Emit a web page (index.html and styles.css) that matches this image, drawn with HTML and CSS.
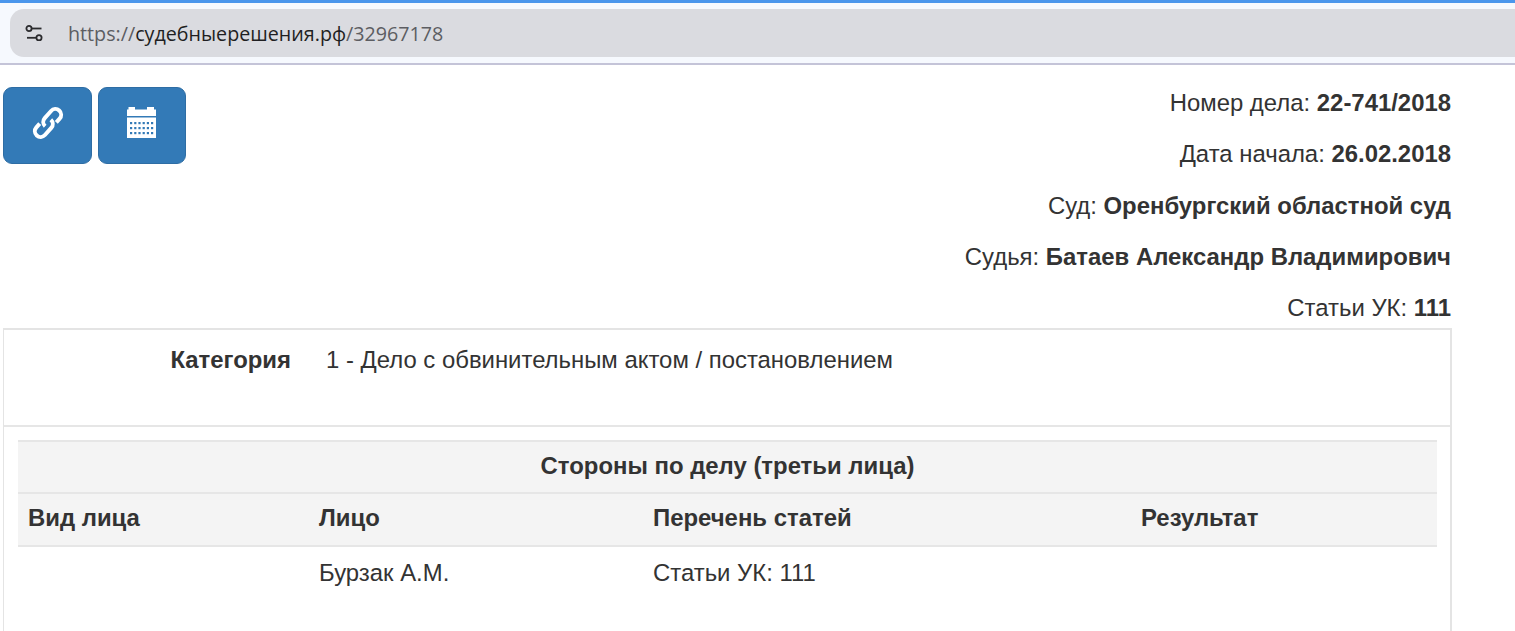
FILE: index.html
```html
<!DOCTYPE html>
<html lang="ru">
<head>
<meta charset="utf-8">
<title>Дело 22-741/2018</title>
<link rel="stylesheet" href="styles.css">
</head>
<body>
<div class="chrome">
  <div class="address">
    <svg class="tune" viewBox="0 0 20 16" width="20" height="16" aria-hidden="true">
      <circle cx="5" cy="3.500" r="2.600"/><path d="M7.600 3.500H17.500"/>
      <circle cx="15" cy="12.800" r="2.600"/><path d="M3 12.800H12.400"/>
    </svg>
    <span class="url"><span class="dim">https://</span>судебныерешения.рф<span class="dim">/32967178</span></span>
  </div>
</div>
<main class="page">
  <header class="top">
    <div class="actions">
      <a class="btn first" href="#"><svg viewBox="-3 -3 38 38" width="38" height="38" aria-hidden="true">
        <g class="link" transform="rotate(-48 16 16)">
          <path d="M10 10.250H5A5.750 5.750 0 0 0 5 21.750H14.500A5.750 5.750 0 0 0 20.250 16"/>
          <path d="M22 21.750H27A5.750 5.750 0 0 0 27 10.250H17.500A5.750 5.750 0 0 0 11.750 16"/>
        </g></svg></a>
      <a class="btn" href="#"><svg viewBox="0 0 32 32" width="32" height="32" aria-hidden="true">
        <path class="cal" d="M1 2.500H2.500V0H9V2.500H21V0H28V2.500H30V9H1ZM1 10.500H30V31H1Z"/>
        <g class="dots">
          <rect x="4" y="15" width="2.200" height="2.200"/><rect x="8.200" y="15" width="2.200" height="2.200"/><rect x="12.400" y="15" width="2.200" height="2.200"/><rect x="16.600" y="15" width="2.200" height="2.200"/><rect x="20.800" y="15" width="2.200" height="2.200"/><rect x="25" y="15" width="2.200" height="2.200"/>
          <rect x="4" y="20" width="2.200" height="2.200"/><rect x="8.200" y="20" width="2.200" height="2.200"/><rect x="12.400" y="20" width="2.200" height="2.200"/><rect x="16.600" y="20" width="2.200" height="2.200"/><rect x="20.800" y="20" width="2.200" height="2.200"/><rect x="25" y="20" width="2.200" height="2.200"/>
          <rect x="4" y="25" width="2.200" height="2.200"/><rect x="8.200" y="25" width="2.200" height="2.200"/><rect x="12.400" y="25" width="2.200" height="2.200"/><rect x="16.600" y="25" width="2.200" height="2.200"/><rect x="20.800" y="25" width="2.200" height="2.200"/><rect x="25" y="25" width="2.200" height="2.200"/>
        </g></svg></a>
    </div>
    <div class="meta">
      <p>Номер дела: <b>22-741/2018</b></p>
      <p>Дата начала: <b>26.02.2018</b></p>
      <p>Суд: <b>Оренбургский областной суд</b></p>
      <p>Судья: <b>Батаев Александр Владимирович</b></p>
      <p>Статьи УК: <b>111</b></p>
    </div>
  </header>
  <section class="box">
    <div class="cat">
      <div class="cat-label">Категория</div>
      <div class="cat-value">1 - Дело с обвинительным актом / постановлением</div>
    </div>
    <div class="inner">
      <table>
        <colgroup><col class="c1"><col class="c2"><col class="c3"><col></colgroup>
        <thead>
          <tr><th colspan="4" class="title">Стороны по делу (третьи лица)</th></tr>
          <tr><th>Вид лица</th><th>Лицо</th><th>Перечень статей</th><th>Результат</th></tr>
        </thead>
        <tbody>
          <tr><td></td><td>Бурзак А.М.</td><td>Статьи УК: 111</td><td></td></tr>
        </tbody>
      </table>
    </div>
  </section>
</main>
</body>
</html>
```
FILE: styles.css
```css
html, body { margin: 0; height: 100%; overflow: hidden; background: #fff; }
body { font-family: "Liberation Sans", Arial, sans-serif; font-size: 23.9px; color: #333; }

.chrome { box-sizing: border-box; height: 65px; padding: 6px 0 6px 10px; background: #f6f9fe; border-top: 3px solid #4a96ec; border-bottom: 2px solid #c4c4d8; }
.address { height: 48px; display: flex; align-items: center; background: #dadbe0; border-radius: 14px 0 0 14px; padding-left: 14px; }
.tune { flex: none; fill: none; stroke: #2b2b2e; stroke-width: 1.8; }
.url { margin-left: 24px; font-family: "Open Sans", "Noto Sans", sans-serif; font-size: 19.7px; color: #1f1f22; white-space: nowrap; }
.dim { color: #5c5d62; }

.page { padding: 0 63px 0 3px; height: 566px; overflow: hidden; }
.top { display: flex; justify-content: space-between; align-items: flex-start; height: 263px; }
.actions { display: flex; gap: 6px; padding-top: 22px; }
.btn { box-sizing: border-box; width: 88px; height: 77px; display: flex; align-items: center; justify-content: center; background: #337ab7; border: 1px solid #2e6da4; border-radius: 9px; padding-bottom: 6px; }
.btn.first { width: 89px; }
.link { fill: none; stroke: #fff; stroke-width: 4; }
.cal { fill: #fff; }
.dots { fill: #337ab7; }

.meta { text-align: right; padding: 23px 1px 0 0; }
.meta p { margin: 0; height: 51.3px; line-height: 30px; }

.box { box-sizing: border-box; height: 320px; border: 2px solid #e4e4e4; border-left-width: 1px; border-bottom: 0; }
.cat { display: flex; height: 97px; box-sizing: border-box; border-bottom: 2px solid #e6e6e6; padding-top: 15px; line-height: 30px; }
.cat-label { width: 287px; text-align: right; font-weight: 700; }
.cat-value { margin-left: 35px; }
.inner { padding: 13px 13px 0 14px; }
table { width: 100%; table-layout: fixed; border-collapse: collapse; }
.c1 { width: 291px; } .c2 { width: 334px; } .c3 { width: 488px; }
th, td { padding: 0 10px; height: 51px; text-align: left; line-height: 30px; }
th { box-sizing: border-box; height: 53px; padding-bottom: 3px; background: #f4f4f4; font-weight: 700; border-top: 2px solid #e6e6e6; border-bottom: 2px solid #e6e6e6; }
th.title { height: 52px; text-align: center; }
td { padding-bottom: 4px; }
```
